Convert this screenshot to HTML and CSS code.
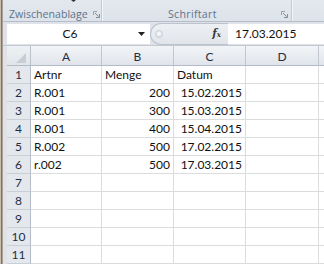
FILE: index.html
```html
<!DOCTYPE html>
<html lang="de">
<head>
<meta charset="utf-8">
<link rel="stylesheet" href="styles.css">
</head>
<body>
<div class="window">
  <div class="edge"></div>
  <div class="app">
    <div class="ribbon">
      <div class="group g1">
        <div class="cut"><span class="mark"></span></div>
        <div class="lrow">
          <span class="label">Zwischenablage</span>
          <svg class="launch" width="7" height="7" viewBox="0 0 7 7"><path d="M0.5 4V0.5H4" fill="none" stroke="#98a4b3"/><path d="M2 2L5.5 5.5M3 6.5H6.5V3" fill="none" stroke="#7f8c9c"/></svg>
        </div>
      </div>
      <div class="group g2">
        <div class="cut"></div>
        <div class="lrow">
          <span class="label">Schriftart</span>
          <svg class="launch" width="7" height="7" viewBox="0 0 7 7"><path d="M0.5 4V0.5H4" fill="none" stroke="#98a4b3"/><path d="M2 2L5.5 5.5M3 6.5H6.5V3" fill="none" stroke="#7f8c9c"/></svg>
        </div>
      </div>
      <div class="group g3"></div>
    </div>
    <div class="fbar">
      <div class="namebox">
        <span class="ref">C6</span>
        <span class="dd"><svg width="7" height="4" viewBox="0 0 7 4"><path d="M0 0H7L3.5 4Z" fill="#222"/></svg></span>
      </div>
      <div class="handle">
        <span class="knob"></span>
        <span class="fx">f<small>x</small></span>
      </div>
      <div class="finput">17.03.2015</div>
    </div>
    <div class="sheet">
      <div class="corner"><span class="tri"></span></div>
      <div class="h">A</div><div class="h">B</div><div class="h">C</div><div class="h">D</div><div class="h hl"></div>

      <div class="r">1</div><div class="c">Artnr</div><div class="c">Menge</div><div class="c">Datum</div><div class="c"></div><div class="c cl"></div>
      <div class="r">2</div><div class="c">R.001</div><div class="c n">200</div><div class="c n">15.02.2015</div><div class="c"></div><div class="c cl"></div>
      <div class="r">3</div><div class="c">R.001</div><div class="c n">300</div><div class="c n">15.03.2015</div><div class="c"></div><div class="c cl"></div>
      <div class="r">4</div><div class="c">R.001</div><div class="c n">400</div><div class="c n">15.04.2015</div><div class="c"></div><div class="c cl"></div>
      <div class="r">5</div><div class="c">R.002</div><div class="c n">500</div><div class="c n">17.02.2015</div><div class="c"></div><div class="c cl"></div>
      <div class="r">6</div><div class="c">r.002</div><div class="c n">500</div><div class="c n">17.03.2015</div><div class="c"></div><div class="c cl"></div>
      <div class="r">7</div><div class="c"></div><div class="c"></div><div class="c"></div><div class="c"></div><div class="c cl"></div>
      <div class="r">8</div><div class="c"></div><div class="c"></div><div class="c"></div><div class="c"></div><div class="c cl"></div>
      <div class="r">9</div><div class="c"></div><div class="c"></div><div class="c"></div><div class="c"></div><div class="c cl"></div>
      <div class="r">10</div><div class="c"></div><div class="c"></div><div class="c"></div><div class="c"></div><div class="c cl"></div>
      <div class="r">11</div><div class="c"></div><div class="c"></div><div class="c"></div><div class="c"></div><div class="c cl"></div>
    </div>
  </div>
</div>
</body>
</html>
```
FILE: styles.css
```css
* { box-sizing: border-box; margin: 0; padding: 0; }
html, body { width: 324px; height: 264px; overflow: hidden; }
body { background: #fff; font-family: "Lato", "Open Sans", sans-serif; color: #111; }

.window { display: flex; height: 264px; }
.edge {
  width: 3px; flex: none;
  background: linear-gradient(to right, #c6bcae 0, #c6bcae 1px, #7f776c 1px, #7f776c 2px, #a99f93 2px);
}
.app { flex: 1; display: flex; flex-direction: column; min-width: 0; }

/* ribbon */
.ribbon {
  height: 22px; display: flex;
  background: linear-gradient(#e3e8ee, #dde3ea);
  border-bottom: 1px solid #b4bdc9;
}
.group { display: flex; flex-direction: column; border-right: 1px solid #c3cbd5; box-shadow: 1px 0 0 #f2f5f8; }
.g1 { width: 99px; }
.g2 { width: 190px; }
.g3 { flex: 1; border-right: 0; box-shadow: none; }
.cut { height: 2px; display: flex; }
.mark { width: 5px; height: 2px; margin-left: 68px; background: #333; clip-path: polygon(0 0, 100% 0, 50% 100%); }
.lrow { display: flex; align-items: center; height: 14px; margin-top: 5px; }
.label {
  font-family: "Open Sans", "Noto Sans", sans-serif; font-size: 10.6px; line-height: 14px;
  color: #62738a; white-space: nowrap;
}
.g1 .label { margin-left: 6px; }
.g2 .label { margin-left: 66px; letter-spacing: 0.3px; }
.launch { margin-left: auto; flex: none; }
.g1 .launch { margin-right: 1px; }
.g2 .launch { margin-right: 3px; }

/* formula bar */
.fbar {
  height: 24px; display: flex; align-items: flex-start;
  padding: 2px 0 0 4px;
  background: #dfe3e9; border-bottom: 1px solid #c2c9d2;
}
.namebox { width: 143px; height: 20px; background: #fff; display: flex; align-items: center; flex: none; }
.ref { flex: 1; text-align: center; font-size: 12px; line-height: 20px; color: #111; }
.dd { width: 17px; display: flex; justify-content: center; align-items: center; }
.handle {
  width: 78px; height: 22px; margin-top: -1px; flex: none;
  display: flex; align-items: center;
  border: 1px solid #bcc3cc; border-right: 0; border-radius: 11px 0 0 11px;
  background: linear-gradient(#eef0f3, #e1e5ea);
}
.knob {
  width: 8px; height: 8px; margin-left: 4px; border-radius: 50%;
  background: radial-gradient(circle at 50% 40%, #fbfcfd, #d5dae1);
  border: 1px solid #c9cfd7;
}
.fx {
  margin-left: auto; margin-right: 7px;
  font-family: "DejaVu Serif", "Liberation Serif", serif; font-style: italic; font-weight: bold;
  font-size: 10.5px; color: #3a3a3a; line-height: 14px;
}
.fx small { font-size: 7px; }
.finput {
  flex: 1; height: 20px; background: #fff; padding-left: 7px;
  font-size: 12px; line-height: 20px; color: #111; white-space: nowrap;
}

/* sheet */
.sheet {
  display: grid;
  grid-template-columns: 24px 71px 72px 72px 73px 1fr;
  grid-template-rows: 20px repeat(11, 18px);
  padding-left: 4px; background: #dfe3e8;
  font-size: 12px;
}
.corner {
  background: linear-gradient(#eef1f4, #e1e5ea);
  border-right: 1px solid #b9c0ca; border-bottom: 1px solid #b3bbc6;
  display: flex; align-items: flex-end; justify-content: flex-end;
  padding: 0 4px 2px 0;
}
.tri { width: 10px; height: 10px; background: #c7cdd5; clip-path: polygon(100% 0, 100% 100%, 0 100%); }
.h {
  background: linear-gradient(#f2f4f7, #e0e4ea);
  border-right: 1px solid #c0c7d0; border-bottom: 1px solid #b3bbc6;
  text-align: center; line-height: 21px; color: #1f2f44;
}
.hl { border-right: 0; }
.r {
  background: #e4e8ed;
  border-right: 1px solid #b3bbc6; border-bottom: 1px solid #c9cfd7;
  text-align: center; line-height: 18px; color: #1f2f44;
}
.c {
  background: #fff;
  border-right: 1px solid #dadcdd; border-bottom: 1px solid #dadcdd;
  padding: 0 3px; line-height: 18px; white-space: nowrap; overflow: hidden;
}
.cl { border-right: 0; }
.n { text-align: right; }
```
